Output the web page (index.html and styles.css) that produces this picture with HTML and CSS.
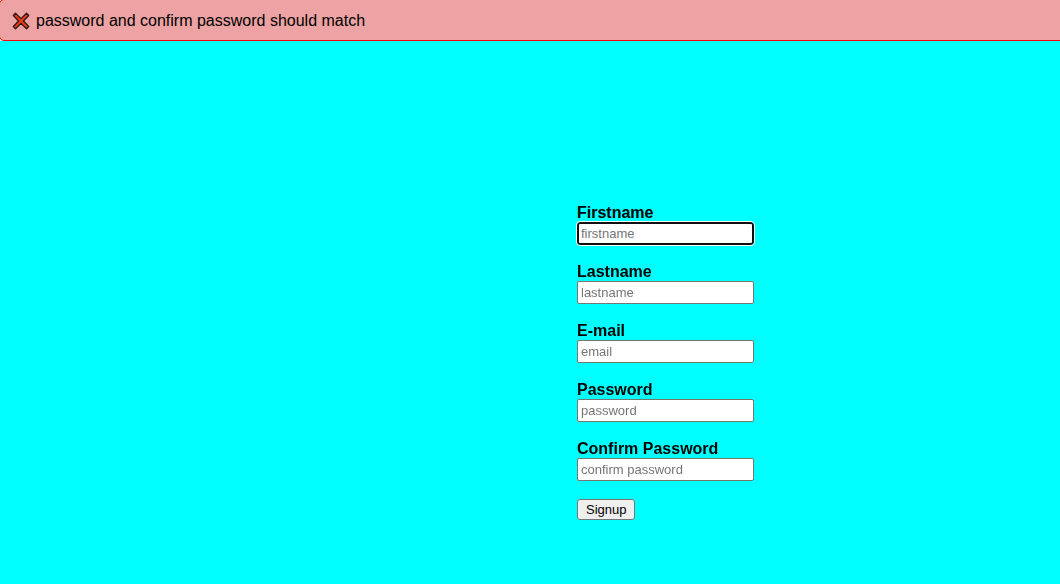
FILE: index.html
```
<!DOCTYPE html>
<html lang="en">
<head>
<meta charset="utf-8">
<title>Signup</title>
<link rel="stylesheet" href="styles.css">
</head>
<body>
<div class="alert-wrap">
<div class="alert" role="alert">
<svg class="alert-icon" viewBox="0 0 18 18" aria-hidden="true">
<path d="M3.5 1.3L9 6.6L14.5 1.3L16.7 3.5L11.4 9L16.7 14.5L14.5 16.7L9 11.4L3.5 16.7L1.3 14.5L6.6 9L1.3 3.5Z" fill="#f03a17" stroke="#2b1712" stroke-width="1.3" stroke-linejoin="round"/>
</svg>
<span>password and confirm password should match</span>
</div>
</div>
<form class="signup">
<div class="field"><label for="firstname">Firstname</label><input id="firstname" type="text" placeholder="firstname" autofocus></div>
<div class="field"><label for="lastname">Lastname</label><input id="lastname" type="text" placeholder="lastname"></div>
<div class="field"><label for="email">E-mail</label><input id="email" type="email" placeholder="email"></div>
<div class="field"><label for="password">Password</label><input id="password" type="password" placeholder="password"></div>
<div class="field"><label for="confirm">Confirm Password</label><input id="confirm" type="password" placeholder="confirm password"></div>
<button class="submit" type="submit">Signup</button>
</form>
</body>
</html>
```
FILE: styles.css
```
* {
  box-sizing: border-box;
}

body {
  margin: 0;
  background: #00ffff;
  color: #000;
  font: 16px/18px "Liberation Sans", Arial, sans-serif;
}

.alert-wrap {
  overflow: hidden;
  background: #fff;
}

.alert {
  display: flex;
  align-items: center;
  gap: 6px;
  margin: -1px -8px 0 -1px;
  padding: 12px 12px 10px;
  border: 1px solid #ff0000;
  border-radius: 5px;
  background: #eda3a3;
}

.alert-icon {
  width: 18px;
  height: 18px;
}

.signup {
  display: flex;
  flex-direction: column;
  align-items: flex-start;
  gap: 18px;
  margin-left: calc(50% + 47px);
  padding: 163px 0 24px;
}

.field {
  display: flex;
  flex-direction: column;
}

.field label {
  font-weight: bold;
}

.field input {
  width: 177px;
  height: 23px;
  padding: 1px 3px;
  border: 1px solid #767676;
  border-radius: 2px;
  background: #fff;
  font: 13px/15px "Liberation Sans", Arial, sans-serif;
}

.field input::placeholder {
  color: #757575;
}

.field input:focus {
  outline: 1px solid #fff;
  border: 2px solid #101010;
  padding: 0 2px;
  border-radius: 3px;
}

.submit {
  height: 21px;
  padding: 0 8px;
  border: 1px solid #767676;
  border-radius: 3px;
  background: #efefef;
  color: #000;
  font: 13px/15px "Liberation Sans", Arial, sans-serif;
}
```
